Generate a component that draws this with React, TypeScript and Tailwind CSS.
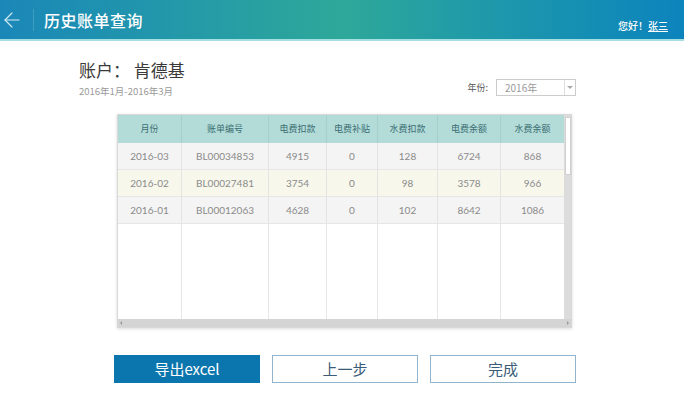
import { ArrowLeft } from "lucide-react";

type Row = {
  month: string;
  billNo: string;
  elecPay: string;
  elecSub: string;
  waterPay: string;
  elecLeft: string;
  waterLeft: string;
};

const rows: Row[] = [
  { month: "2016-03", billNo: "BL00034853", elecPay: "4915", elecSub: "0", waterPay: "128", elecLeft: "6724", waterLeft: "868" },
  { month: "2016-02", billNo: "BL00027481", elecPay: "3754", elecSub: "0", waterPay: "98", elecLeft: "3578", waterLeft: "966" },
  { month: "2016-01", billNo: "BL00012063", elecPay: "4628", elecSub: "0", waterPay: "102", elecLeft: "8642", waterLeft: "1086" },
];

const cols = [
  { title: "月份", w: "w-[64px]" },
  { title: "账单编号", w: "w-[87px]" },
  { title: "电费扣款", w: "w-[58px]" },
  { title: "电费补贴", w: "w-[51px]" },
  { title: "水费扣款", w: "w-[60px]" },
  { title: "电费余额", w: "w-[63px]" },
  { title: "水费余额", w: "w-[63px]" },
];

const rowBg = ["bg-[#f4f4f4]", "bg-[#f7f7ec]", "bg-[#f4f4f4]"];

export default function App() {
  return (
    <div className="w-[684px] h-[403px] bg-white overflow-hidden font-['Noto_Sans_CJK_SC','Noto_Sans',sans-serif]">
      {/* ---------- Header bar ---------- */}
      <div className="h-[41px] flex items-center bg-gradient-to-r from-[#1b87b8] via-[#2ea899] to-[#0d83bd] border-b-2 border-[#a6dfe2]">
        <ArrowLeft className="ml-[0px] w-[24px] h-[24px] text-[#d5ecf4]" strokeWidth={1.1} />
        <div className="ml-[9px] w-px h-[22px] bg-[#3f9ec0]" />
        <span className="ml-[10px] text-[16px] text-white font-medium tracking-[0.5px]">历史账单查询</span>
        <span className="ml-auto mr-[16px] mt-[12px] text-[10px] text-white font-medium">
          您好！<span className="underline">张三</span>
        </span>
      </div>

      {/* ---------- Account info ---------- */}
      <div className="flex items-end pl-[79px] pr-[108px] pt-[17px]">
        <div className="flex flex-col">
          <span className="text-[17px] leading-[24px] text-[#3a3a3a]">账户：&nbsp;肯德基</span>
          <span className="mt-[3px] text-[9.5px] leading-[12px] text-[#9a9a9a]">2016年1月-2016年3月</span>
        </div>
        <div className="ml-auto mb-[1px] flex items-center">
          <span className="text-[9px] text-[#555] mr-[8px]">年份:</span>
          <div className="w-[80px] h-[17px] border border-[#ccc] flex items-center">
            <span className="pl-[8px] text-[10px] text-[#999] flex-1">2016年</span>
            <div className="w-[11px] h-full border-l border-[#ddd] flex items-center justify-center">
              <div className="w-0 h-0 border-l-[3px] border-r-[3px] border-t-[3px] border-l-transparent border-r-transparent border-t-[#aaa]" />
            </div>
          </div>
        </div>
      </div>

      {/* ---------- Table ---------- */}
      <div className="ml-[117px] mt-[17px] w-[455px] h-[214px] border border-[#d8d8d8] shadow-[0_1px_3px_rgba(0,0,0,0.15)] flex flex-col">
        <div className="flex flex-1 min-h-0">
          <div className="flex flex-col w-[446px]">
            {/* header row */}
            <div className="flex h-[28px] bg-[#b3dcd9]">
              {cols.map((c, i) => (
                <div
                  key={c.title}
                  className={`${c.w} flex items-center justify-center text-[9px] text-[#3b6e72] ${i < cols.length - 1 ? "border-r border-[#a5d0cd]" : ""}`}
                >
                  {c.title}
                </div>
              ))}
            </div>
            {rows.map((r, ri) => {
              const vals = [r.month, r.billNo, r.elecPay, r.elecSub, r.waterPay, r.elecLeft, r.waterLeft];
              return (
                <div key={r.month} className={`flex h-[27px] border-b border-[#e6e6e6] ${rowBg[ri]}`}>
                  {vals.map((v, i) => (
                    <div
                      key={i}
                      className={`${cols[i].w} flex items-center justify-center text-[10px] text-[#8a8a8a] font-['Lato','Noto_Sans',sans-serif] ${i < vals.length - 1 ? "border-r border-[#e3e3e3]" : ""}`}
                    >
                      {v}
                    </div>
                  ))}
                </div>
              );
            })}
            {/* empty area with column lines */}
            <div className="flex flex-1 bg-white">
              {cols.map((c, i) => (
                <div key={i} className={`${c.w} ${i < cols.length - 1 ? "border-r border-[#e6e6e6]" : ""}`} />
              ))}
            </div>
          </div>
          {/* vertical scrollbar */}
          <div className="w-[9px] bg-[#dcdcdc] flex flex-col items-center pt-[2px]">
            <div className="w-[6px] h-[58px] bg-white border border-[#cfcfcf] rounded-[1px]" />
          </div>
        </div>
        {/* horizontal scrollbar */}
        <div className="h-[8px] bg-[#d4d4d4] flex items-center px-[2px]">
          <div className="w-0 h-0 border-t-[2px] border-b-[2px] border-r-[2px] border-t-transparent border-b-transparent border-r-[#999]" />
          <div className="ml-auto w-0 h-0 border-t-[2px] border-b-[2px] border-l-[2px] border-t-transparent border-b-transparent border-l-[#999]" />
        </div>
      </div>

      {/* ---------- Buttons ---------- */}
      <div className="flex ml-[114px] mt-[27px] gap-[12px]">
        <button className="w-[146px] h-[28px] bg-[#0b76ad] text-white text-[15px] flex items-center justify-center">
          导出excel
        </button>
        <button className="w-[146px] h-[28px] border border-[#8fb4cc] text-[#3b5c78] text-[15px] flex items-center justify-center">
          上一步
        </button>
        <button className="w-[146px] h-[28px] border border-[#8fb4cc] text-[#3b5c78] text-[15px] flex items-center justify-center">
          完成
        </button>
      </div>
    </div>
  );
}
